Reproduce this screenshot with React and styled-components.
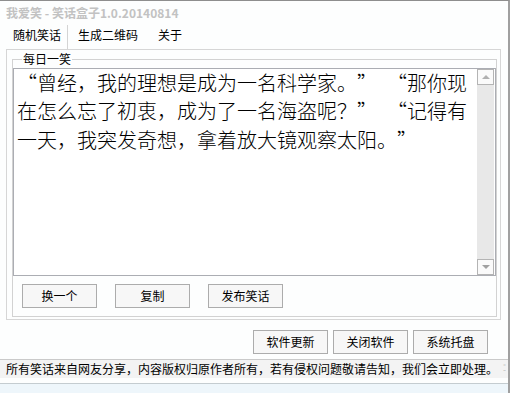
import React from 'react'
import styled, { createGlobalStyle } from 'styled-components'

const GlobalStyle = createGlobalStyle`
  html, body {
    margin: 0;
    padding: 0;
    background: #ffffff;
  }
  body {
    font-family: "Noto Sans CJK SC", "Liberation Sans", sans-serif;
    font-size: 12px;
    color: #000;
  }
`

const Window = styled.div`
  width: 510px;
  height: 393px;
  box-sizing: border-box;
  border-top: 1px solid #8e8e8e;
  border-right: 2px solid #a0a0a0;
  background: #fdfefe;
  display: flex;
  flex-direction: column;
`

const TitleBar = styled.div`
  height: 26px;
  padding-left: 6px;
  display: flex;
  align-items: center;
  font-weight: bold;
  color: #c2c2c2;
  line-height: 14px;
`

const TabBar = styled.div`
  height: 24px;
  padding-left: 7px;
  display: flex;
`

const Tab = styled.div`
  height: 24px;
  line-height: 20px;
  padding: 0 ${p => (p.$active ? '6px' : '10px')};
  border-right: ${p => (p.$active ? '1px solid #d4d4d4' : 'none')};
`

const Body = styled.div`
  padding: 0 7px 0 6px;
  display: flex;
  flex-direction: column;
`

const Panel = styled.div`
  height: 271px;
  box-sizing: border-box;
  border: 1px solid #d6d6d6;
  padding: 9px 3px 2px 5px;
`

const GroupBox = styled.div`
  position: relative;
  height: 258px;
  box-sizing: border-box;
  border: 1px solid #d2d2d2;
  padding-top: 8px;
`

const Legend = styled.span`
  position: absolute;
  top: -8px;
  left: 9px;
  padding: 0 1px;
  background: #fdfefe;
  line-height: 14px;
`

const TextArea = styled.div`
  height: 208px;
  box-sizing: border-box;
  border: 1px solid #abadb3;
  background: #fff;
  display: flex;
`

const TextBody = styled.div`
  flex: 1;
  padding-left: 3px;
  font-size: 20px;
  font-weight: 300;
  line-height: 28.5px;
  white-space: pre;
  overflow: hidden;
`

const Quote = styled.span`
  display: inline-block;
  width: 1em;
  text-align: ${p => (p.$open ? 'right' : 'left')};
`

const Gap = styled.span`
  display: inline-block;
  width: 0.5em;
`

const ScrollBar = styled.div`
  width: 17px;
  margin-right: 1px;
  background: #e8e8e8;
  display: flex;
  flex-direction: column;
  justify-content: space-between;
`

const ScrollButton = styled.div`
  height: 16px;
  box-sizing: border-box;
  border: 1px solid #b4b4b4;
  background: #fafafa;
  display: flex;
  align-items: center;
  justify-content: center;
  &::after {
    content: '';
    border-left: 4px solid transparent;
    border-right: 4px solid transparent;
    ${p =>
      p.$dir === 'up'
        ? 'border-bottom: 4px solid #b0b0b0;'
        : 'border-top: 4px solid #a0a0a0;'}
  }
`

const ButtonRow = styled.div`
  margin-top: 8px;
  padding-left: 9px;
  display: flex;
  gap: 18px;
`

const Button = styled.div`
  width: 75px;
  height: 24px;
  box-sizing: border-box;
  border: 1px solid #acacac;
  background: #f7f7f7;
  display: flex;
  align-items: center;
  justify-content: center;
  line-height: 14px;
`

const BottomBar = styled.div`
  height: 39px;
  box-sizing: border-box;
  padding: 10px 13px 0 0;
  display: flex;
  justify-content: flex-end;
  gap: 5px;
`

const StatusBar = styled.div`
  height: 21px;
  box-sizing: border-box;
  border-top: 1px solid #cacaca;
  background: #f3f3f3;
  padding-left: 6px;
  display: flex;
  align-items: center;
  line-height: 14px;
  position: relative;
`

const Grip = styled.span`
  position: absolute;
  right: 3px;
  bottom: 3px;
  color: #c0c0c0;
  font-size: 9px;
  letter-spacing: -1px;
`

const Footer = styled.div`
  height: 11px;
  box-sizing: border-box;
  margin-top: 5px;
  border-top: 1px solid #c4ccd0;
  background: #eef6fb;
`

export default function App() {
  return (
    <>
      <GlobalStyle />
      <Window>
        <TitleBar>我爱笑 - 笑话盒子1.0.20140814</TitleBar>
        <TabBar>
          <Tab $active>随机笑话</Tab>
          <Tab>生成二维码</Tab>
          <Tab>关于</Tab>
        </TabBar>
        <Body>
          <Panel>
            <GroupBox>
              <Legend>每日一笑</Legend>
              <TextArea>
                <TextBody>
                  <div>
                    <Quote $open>“</Quote>曾经，我的理想是成为一名科学家。<Quote>”</Quote>
                    <Gap />
                    <Quote $open>“</Quote>那你现
                  </div>
                  <div>
                    在怎么忘了初衷，成为了一名海盗呢？<Quote>”</Quote>
                    <Gap />
                    <Quote $open>“</Quote>记得有
                  </div>
                  <div>
                    一天，我突发奇想，拿着放大镜观察太阳。<Quote>”</Quote>
                  </div>
                </TextBody>
                <ScrollBar>
                  <ScrollButton $dir="up" />
                  <ScrollButton $dir="down" />
                </ScrollBar>
              </TextArea>
              <ButtonRow>
                <Button>换一个</Button>
                <Button>复制</Button>
                <Button>发布笑话</Button>
              </ButtonRow>
            </GroupBox>
          </Panel>
          <BottomBar>
            <Button>软件更新</Button>
            <Button>关闭软件</Button>
            <Button>系统托盘</Button>
          </BottomBar>
        </Body>
        <StatusBar>
          所有笑话来自网友分享，内容版权归原作者所有，若有侵权问题敬请告知，我们会立即处理。
          <Grip>⁚⁚</Grip>
        </StatusBar>
        <Footer />
      </Window>
    </>
  )
}
